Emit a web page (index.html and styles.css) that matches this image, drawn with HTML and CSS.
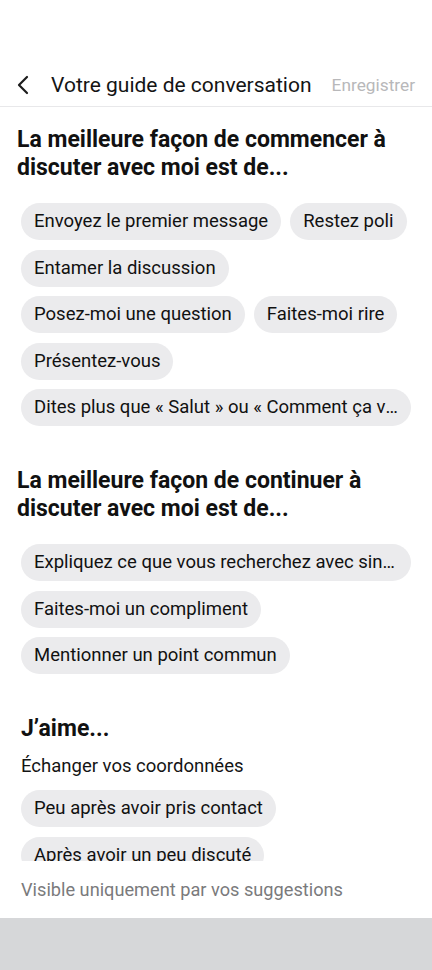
FILE: index.html
```html
<!DOCTYPE html>
<html lang="fr">

<head>
    <meta charset="UTF-8">
    <meta name="viewport" content="width=device-width, initial-scale=1.0">
    <title>Votre guide de conversation</title>
    <link rel="stylesheet" href="styles.css">
</head>

<body>
    <div class="status-bar"></div>

    <div class="header">
        <button class="back-btn" aria-label="Retour">
            <svg width="14" height="20" viewBox="0 0 14 20">
                <path d="M11 2 L3 10 L11 18" fill="none" stroke="#1c1c1c" stroke-width="2.2" stroke-linecap="round" stroke-linejoin="round"/>
            </svg>
        </button>
        <h1>Votre guide de conversation</h1>
        <span class="save">Enregistrer</span>
    </div>

    <div class="scroll">
        <div class="section">
            <h2>La meilleure façon de commencer à discuter avec moi est de...</h2>
            <div class="chips">
                <span class="chip">Envoyez le premier message</span>
                <span class="chip">Restez poli</span>
                <span class="chip">Entamer la discussion</span>
                <span class="chip">Posez-moi une question</span>
                <span class="chip">Faites-moi rire</span>
                <span class="chip">Présentez-vous</span>
                <span class="chip">Dites plus que « Salut » ou « Comment ça va ? »</span>
            </div>
        </div>

        <div class="section">
            <h2>La meilleure façon de continuer à discuter avec moi est de...</h2>
            <div class="chips">
                <span class="chip">Expliquez ce que vous recherchez avec sincérité</span>
                <span class="chip">Faites-moi un compliment</span>
                <span class="chip">Mentionner un point commun</span>
            </div>
        </div>

        <div class="section">
            <h2 class="big">J’aime...</h2>
            <p class="sub">Échanger vos coordonnées</p>
            <div class="chips">
                <span class="chip">Peu après avoir pris contact</span>
                <span class="chip">Après avoir un peu discuté</span>
            </div>
        </div>
    </div>

    <p class="footer-note">Visible uniquement par vos suggestions</p>

    <div class="nav-bar"></div>
</body>

</html>
```

FILE: styles.css
```css
body {
    margin: 0;
    font-family: Roboto, 'Noto Sans', sans-serif;
    background-color: #ffffff;
    color: #141414;
    width: 432px;
    height: 970px;
    overflow: hidden;
    display: flex;
    flex-direction: column;
}

.status-bar {
    height: 60px;
    flex: none;
}

.header {
    height: 42px;
    flex: none;
    display: flex;
    align-items: center;
    border-bottom: 1px solid #e8e8ea;
    padding: 4px 17px 0 16px;
}

.back-btn {
    border: none;
    background: none;
    padding: 0;
    width: 35px;
    height: 24px;
    display: flex;
    align-items: center;
    cursor: pointer;
}

.header h1 {
    margin: 0;
    font-size: 21px;
    font-weight: 400;
    color: #141414;
    flex: 1;
    white-space: nowrap;
}

.save {
    font-size: 17.3px;
    color: #b8b8ba;
}

.scroll {
    height: 754px;
    flex: none;
    overflow: hidden;
    padding: 19px 17px 0;
    box-sizing: border-box;
}

.section {
    margin-bottom: 41px;
}

.section h2 {
    margin: 0 0 21px;
    font-size: 23px;
    line-height: 28px;
    font-weight: 700;
    color: #111111;
}

.section h2.big {
    margin: 0 4px 11px;
}

.sub {
    margin: 0 4px 12px;
    font-size: 18.5px;
    line-height: 24px;
}

.chips {
    display: flex;
    flex-wrap: wrap;
    gap: 9.5px 9px;
    padding: 0 4px;
}

.chip {
    height: 37px;
    line-height: 37px;
    padding: 0 13px;
    border-radius: 19px;
    background-color: #ebebed;
    font-size: 18.5px;
    color: #111111;
    white-space: nowrap;
    overflow: hidden;
    text-overflow: ellipsis;
    max-width: 100%;
    box-sizing: border-box;
}

.footer-note {
    margin: 0;
    height: 57px;
    flex: none;
    padding: 0 21px;
    font-size: 18.2px;
    line-height: 58px;
    color: #7a7a7c;
}

.nav-bar {
    flex: 1;
    background-color: #d6d7d9;
}
```
